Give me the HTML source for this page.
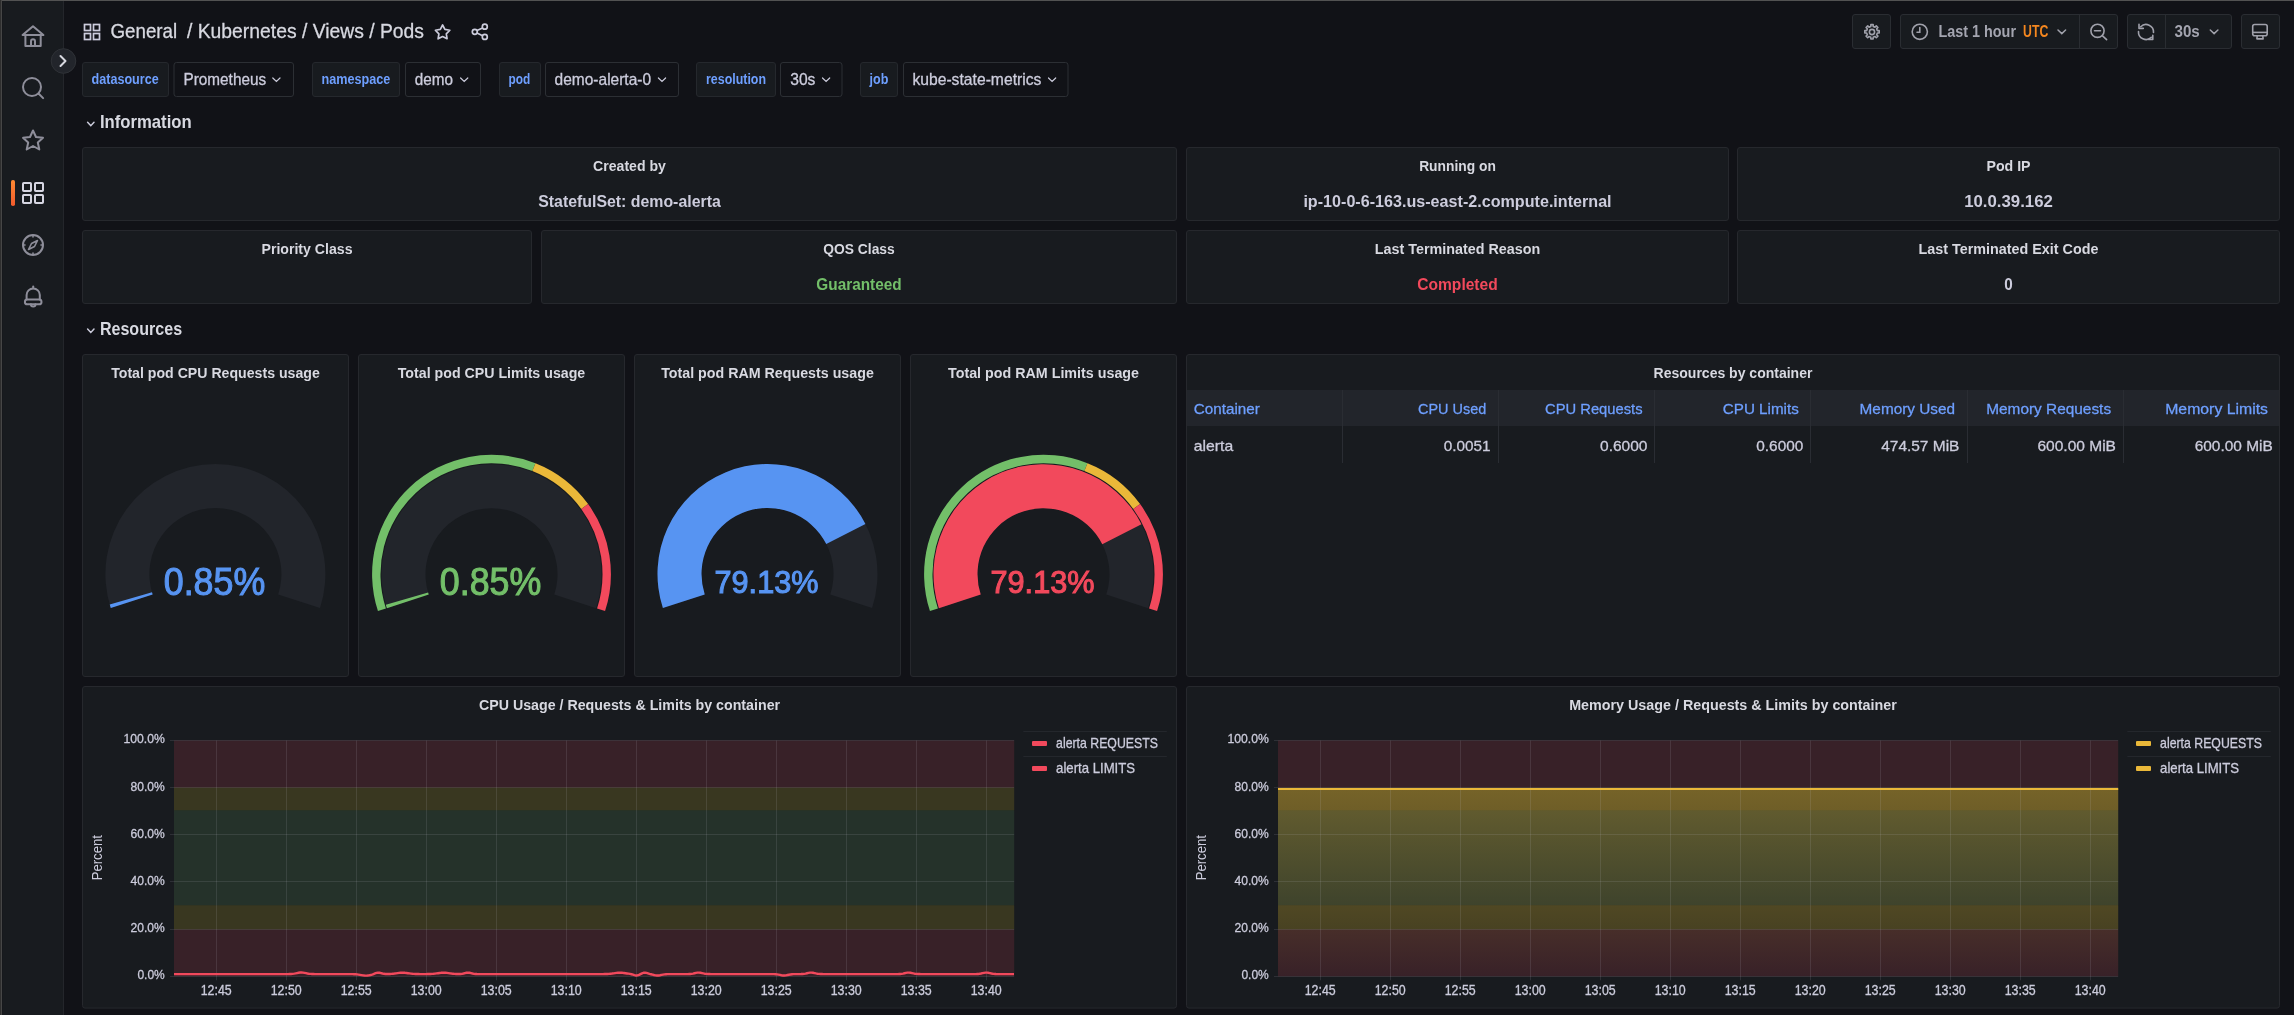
<!DOCTYPE html>
<html><head><meta charset="utf-8"><title>Kubernetes / Views / Pods</title>
<style>html,body{margin:0;padding:0;background:#111217;overflow:hidden}svg{display:block;will-change:transform}text{font-family:"Liberation Sans",sans-serif}</style>
</head><body>
<svg width="2294" height="1015" viewBox="0 0 2294 1015">
<rect x="0.00" y="0.00" width="2294.00" height="1015.00" fill="#111217"/>
<rect x="2.00" y="1.00" width="61.00" height="1014.00" fill="#181b1f"/>
<rect x="63.00" y="1.00" width="1.00" height="1014.00" fill="#24262b"/>
<rect x="0.00" y="0.00" width="1.00" height="1015.00" fill="#2e2e2e"/>
<rect x="1.00" y="0.00" width="1.00" height="1015.00" fill="#464646"/>
<rect x="2.00" y="1.00" width="1.00" height="1015.00" fill="#16181c"/>
<rect x="2.00" y="0.00" width="2292.00" height="1.00" fill="#525252"/>
<g fill="none" stroke="#8e8e9a" stroke-width="2" stroke-linejoin="round">
<path d="M22.6 35.1 L33 26.2 L43.4 35.1 Z"/>
<path d="M25.4 35.1 V46 H40.7 V35.1"/>
<path d="M31 46 V41.2 a2 2 0 0 1 4 0 V46"/>
<circle cx="32" cy="87" r="9"/>
<path d="M38.5 93.5 L43.1 98.1" stroke-linecap="round"/>
<path d="M33 130.5 L36 137 L43 137.8 L37.8 142.5 L39.3 149.5 L33 146 L26.7 149.5 L28.2 142.5 L23 137.8 L30 137 Z"/>
</g>
<g fill="none" stroke="#d6d6e2" stroke-width="2">
<rect x="23" y="183" width="8" height="8" rx="0.8"/>
<rect x="35" y="183" width="8" height="8" rx="0.8"/>
<rect x="23" y="195" width="8" height="8" rx="0.8"/>
<rect x="35" y="195" width="8" height="8" rx="0.8"/>
</g>
<defs><linearGradient id="og" x1="0" y1="0" x2="0" y2="1"><stop offset="0" stop-color="#ff8a33"/><stop offset="1" stop-color="#f25a2c"/></linearGradient></defs>
<rect x="11.00" y="180.00" width="4.00" height="26.00" fill="url(#og)" rx="1.8"/>
<g fill="none" stroke="#8e8e9a" stroke-width="2" stroke-linecap="round" stroke-linejoin="round">
<circle cx="33" cy="245" r="10"/>
<path d="M37.5 240.5 L34.5 246.5 L28.5 249.5 L31.5 243.5 Z" stroke-width="1.6"/>
<path d="M33 235.5v1.5 M33 253v1.5 M23.5 245h1.5 M41 245h1.5" stroke-width="1.6"/>
<path d="M26.6 299.6 V295 a6.6 6.6 0 0 1 13.2 0 V299.6"/>
<rect x="24.9" y="299.6" width="16.6" height="4.7" rx="2.35"/>
<path d="M33.2 286.4 v1.8"/>
<path d="M30.9 304.3 a2.3 2.3 0 0 0 4.6 0"/>
</g>
<circle cx="63.5" cy="61" r="12.3" fill="#22252b" stroke="#2f3237" stroke-width="1"/>
<path d="M60.5 56 L65.5 61 L60.5 66" fill="none" stroke="#d8d9e0" stroke-width="2" stroke-linecap="round" stroke-linejoin="round"/>
<g fill="none" stroke="#ccccdc" stroke-width="1.7">
<rect x="84.5" y="24.5" width="6" height="6"/>
<rect x="93.5" y="24.5" width="6" height="6"/>
<rect x="84.5" y="33.5" width="6" height="6"/>
<rect x="93.5" y="33.5" width="6" height="6"/>
</g>
<text x="110.5" y="38.1" font-size="20.64" font-weight="normal" fill="#d8d9e1" text-anchor="start" textLength="66.7" lengthAdjust="spacingAndGlyphs" stroke="#d8d9e1" stroke-width="0.3">General</text>
<text x="187.0" y="38.1" font-size="20.64" font-weight="normal" fill="#d8d9e1" text-anchor="start" textLength="237.0" lengthAdjust="spacingAndGlyphs" stroke="#d8d9e1" stroke-width="0.3">/ Kubernetes / Views / Pods</text>
<path d="M442.60 25.00 L444.89 29.44 L449.83 30.25 L446.31 33.81 L447.07 38.75 L442.60 36.50 L438.13 38.75 L438.89 33.81 L435.37 30.25 L440.31 29.44 Z" fill="none" stroke="#ccccdc" stroke-width="1.7" stroke-linejoin="round"/>
<g fill="none" stroke="#ccccdc" stroke-width="1.7"><circle cx="484.8" cy="26.7" r="2.5"/><circle cx="474.8" cy="31.8" r="2.5"/><circle cx="484.8" cy="36.9" r="2.5"/><path d="M477 30.6 L482.6 27.9 M477 33 L482.6 35.7"/></g>
<rect x="1852.50" y="14.50" width="38.00" height="34.00" fill="#181b1f" stroke="#2a2d32" stroke-width="1" rx="2.5"/>
<rect x="1900.50" y="14.50" width="217.00" height="34.00" fill="#181b1f" stroke="#2a2d32" stroke-width="1" rx="2.5"/>
<rect x="2079.00" y="15.00" width="1.00" height="33.00" fill="#2a2d32"/>
<rect x="2127.50" y="14.50" width="104.00" height="34.00" fill="#181b1f" stroke="#2a2d32" stroke-width="1" rx="2.5"/>
<rect x="2165.00" y="15.00" width="1.00" height="33.00" fill="#2a2d32"/>
<rect x="2241.50" y="14.50" width="38.00" height="34.00" fill="#181b1f" stroke="#2a2d32" stroke-width="1" rx="2.5"/>
<path d="M1876.64 28.84 L1877.37 30.61 L1879.21 30.66 L1879.21 32.94 L1877.37 32.99 L1876.64 34.76 L1877.91 36.09 L1876.29 37.71 L1874.96 36.44 L1873.19 37.17 L1873.14 39.01 L1870.86 39.01 L1870.81 37.17 L1869.04 36.44 L1867.71 37.71 L1866.09 36.09 L1867.36 34.76 L1866.63 32.99 L1864.79 32.94 L1864.79 30.66 L1866.63 30.61 L1867.36 28.84 L1866.09 27.51 L1867.71 25.89 L1869.04 27.16 L1870.81 26.43 L1870.86 24.59 L1873.14 24.59 L1873.19 26.43 L1874.96 27.16 L1876.29 25.89 L1877.91 27.51 Z" fill="none" stroke="#a0a1ab" stroke-width="1.6" stroke-linejoin="round"/>
<circle cx="1872" cy="32" r="2.6" fill="none" stroke="#a0a1ab" stroke-width="1.6"/>
<g fill="none" stroke="#a0a1ab" stroke-width="1.6" stroke-linecap="round"><circle cx="1919.8" cy="31.8" r="7.6"/><path d="M1919.8 27.5 V32.2 H1917"/></g>
<text x="1938.5" y="37.0" font-size="16.13" font-weight="bold" fill="#a4a5b0" text-anchor="start" textLength="77.5" lengthAdjust="spacingAndGlyphs">Last 1 hour</text>
<text x="2023.0" y="37.0" font-size="16.13" font-weight="bold" fill="#f5871f" text-anchor="start" textLength="25.3" lengthAdjust="spacingAndGlyphs">UTC</text>
<path d="M2058 30 L2061.8 33.6 L2065.6 30" fill="none" stroke="#a0a1ab" stroke-width="1.5" stroke-linecap="round"/>
<g fill="none" stroke="#a0a1ab" stroke-width="1.6" stroke-linecap="round"><circle cx="2097.5" cy="30.8" r="6.6"/><path d="M2102.3 35.6 L2106.6 39.6 M2094.5 30.8 H2100.5"/></g>
<g fill="none" stroke="#a0a1ab" stroke-width="1.6" stroke-linecap="round" stroke-linejoin="round"><path d="M2153.5 32.5 A7.5 7.5 0 0 0 2140.7 26.7"/><path d="M2139 24.2 V28.4 H2143.3"/><path d="M2138.5 31.5 A7.5 7.5 0 0 0 2151.3 37.3"/><path d="M2152.8 35.2 V39.4 H2148.5"/></g>
<text x="2174.5" y="37.0" font-size="16.13" font-weight="bold" fill="#a4a5b0" text-anchor="start" textLength="25.3" lengthAdjust="spacingAndGlyphs">30s</text>
<path d="M2210.3 30 L2214.1 33.6 L2217.9 30" fill="none" stroke="#a0a1ab" stroke-width="1.5" stroke-linecap="round"/>
<g fill="none" stroke="#a0a1ab" stroke-width="1.6" stroke-linejoin="round"><rect x="2252.7" y="24.5" width="14.5" height="11.2" rx="2"/><path d="M2252.7 32.4 H2267.2"/><path d="M2257.2 35.7 L2256.9 38.9 H2263.1 L2262.8 35.7"/></g>
<rect x="82.50" y="62.50" width="86.00" height="34.00" fill="#181b1f" stroke="#25282d" stroke-width="1" rx="2.5"/>
<text x="91.6" y="84.0" font-size="13.81" font-weight="bold" fill="#6e9fff" text-anchor="start" textLength="67.1" lengthAdjust="spacingAndGlyphs">datasource</text>
<rect x="174.00" y="62.50" width="119.50" height="34.00" fill="#111217" stroke="#2c2f34" stroke-width="1" rx="2.5"/>
<text x="183.5" y="85.0" font-size="15.99" font-weight="normal" fill="#ccccdc" text-anchor="start" textLength="82.6" lengthAdjust="spacingAndGlyphs" stroke="#ccccdc" stroke-width="0.3">Prometheus</text>
<path d="M272.8 78 L276.4 81.4 L280.0 78" fill="none" stroke="#ccccdc" stroke-width="1.2" stroke-linecap="round"/>
<rect x="312.50" y="62.50" width="87.00" height="34.00" fill="#181b1f" stroke="#25282d" stroke-width="1" rx="2.5"/>
<text x="321.5" y="84.0" font-size="13.81" font-weight="bold" fill="#6e9fff" text-anchor="start" textLength="68.8" lengthAdjust="spacingAndGlyphs">namespace</text>
<rect x="405.50" y="62.50" width="75.00" height="34.00" fill="#111217" stroke="#2c2f34" stroke-width="1" rx="2.5"/>
<text x="414.8" y="85.0" font-size="15.99" font-weight="normal" fill="#ccccdc" text-anchor="start" textLength="38.2" lengthAdjust="spacingAndGlyphs" stroke="#ccccdc" stroke-width="0.3">demo</text>
<path d="M460.6 78 L464.2 81.4 L467.8 78" fill="none" stroke="#ccccdc" stroke-width="1.2" stroke-linecap="round"/>
<rect x="499.50" y="62.50" width="41.00" height="34.00" fill="#181b1f" stroke="#25282d" stroke-width="1" rx="2.5"/>
<text x="508.6" y="84.0" font-size="13.81" font-weight="bold" fill="#6e9fff" text-anchor="start" textLength="21.8" lengthAdjust="spacingAndGlyphs">pod</text>
<rect x="545.50" y="62.50" width="133.00" height="34.00" fill="#111217" stroke="#2c2f34" stroke-width="1" rx="2.5"/>
<text x="554.6" y="85.0" font-size="15.99" font-weight="normal" fill="#ccccdc" text-anchor="start" textLength="96.5" lengthAdjust="spacingAndGlyphs" stroke="#ccccdc" stroke-width="0.3">demo-alerta-0</text>
<path d="M658.4 78 L662.0 81.4 L665.6 78" fill="none" stroke="#ccccdc" stroke-width="1.2" stroke-linecap="round"/>
<rect x="696.50" y="62.50" width="79.00" height="34.00" fill="#181b1f" stroke="#25282d" stroke-width="1" rx="2.5"/>
<text x="706.0" y="84.0" font-size="13.81" font-weight="bold" fill="#6e9fff" text-anchor="start" textLength="60.0" lengthAdjust="spacingAndGlyphs">resolution</text>
<rect x="780.50" y="62.50" width="61.50" height="34.00" fill="#111217" stroke="#2c2f34" stroke-width="1" rx="2.5"/>
<text x="790.2" y="85.0" font-size="15.99" font-weight="normal" fill="#ccccdc" text-anchor="start" textLength="25.2" lengthAdjust="spacingAndGlyphs" stroke="#ccccdc" stroke-width="0.3">30s</text>
<path d="M822.5 78 L826.1 81.4 L829.7 78" fill="none" stroke="#ccccdc" stroke-width="1.2" stroke-linecap="round"/>
<rect x="860.50" y="62.50" width="37.00" height="34.00" fill="#181b1f" stroke="#25282d" stroke-width="1" rx="2.5"/>
<text x="869.6" y="84.0" font-size="13.81" font-weight="bold" fill="#6e9fff" text-anchor="start" textLength="18.8" lengthAdjust="spacingAndGlyphs">job</text>
<rect x="903.50" y="62.50" width="164.50" height="34.00" fill="#111217" stroke="#2c2f34" stroke-width="1" rx="2.5"/>
<text x="912.4" y="85.0" font-size="15.99" font-weight="normal" fill="#ccccdc" text-anchor="start" textLength="129.0" lengthAdjust="spacingAndGlyphs" stroke="#ccccdc" stroke-width="0.3">kube-state-metrics</text>
<path d="M1048.5 78 L1052.1 81.4 L1055.7 78" fill="none" stroke="#ccccdc" stroke-width="1.2" stroke-linecap="round"/>
<path d="M87.6 122.3 L90.8 125.7 L94 122.3" fill="none" stroke="#ccccdc" stroke-width="1.5" stroke-linecap="round"/>
<text x="99.9" y="127.7" font-size="17.88" font-weight="bold" fill="#d8d9e1" text-anchor="start" textLength="91.8" lengthAdjust="spacingAndGlyphs">Information</text>
<path d="M87.6 329.1 L90.8 332.5 L94 329.1" fill="none" stroke="#ccccdc" stroke-width="1.5" stroke-linecap="round"/>
<text x="99.9" y="334.9" font-size="17.88" font-weight="bold" fill="#d8d9e1" text-anchor="start" textLength="82.2" lengthAdjust="spacingAndGlyphs">Resources</text>
<rect x="82.50" y="147.50" width="1094.00" height="73.00" fill="#181b1f" stroke="#26282d" stroke-width="1" rx="2.5"/>
<text x="629.5" y="170.8" font-size="15.55" font-weight="bold" fill="#d8d9e1" text-anchor="middle" textLength="72.8" lengthAdjust="spacingAndGlyphs">Created by</text>
<text x="629.5" y="206.6" font-size="16.86" font-weight="bold" fill="#ccccdc" text-anchor="middle" textLength="182.5" lengthAdjust="spacingAndGlyphs">StatefulSet: demo-alerta</text>
<rect x="1186.50" y="147.50" width="542.00" height="73.00" fill="#181b1f" stroke="#26282d" stroke-width="1" rx="2.5"/>
<text x="1457.5" y="170.8" font-size="15.55" font-weight="bold" fill="#d8d9e1" text-anchor="middle" textLength="76.7" lengthAdjust="spacingAndGlyphs">Running on</text>
<text x="1457.5" y="206.6" font-size="16.86" font-weight="bold" fill="#ccccdc" text-anchor="middle" textLength="308.2" lengthAdjust="spacingAndGlyphs">ip-10-0-6-163.us-east-2.compute.internal</text>
<rect x="1737.50" y="147.50" width="542.00" height="73.00" fill="#181b1f" stroke="#26282d" stroke-width="1" rx="2.5"/>
<text x="2008.5" y="170.8" font-size="15.55" font-weight="bold" fill="#d8d9e1" text-anchor="middle" textLength="44.1" lengthAdjust="spacingAndGlyphs">Pod IP</text>
<text x="2008.5" y="206.6" font-size="16.86" font-weight="bold" fill="#ccccdc" text-anchor="middle" textLength="88.7" lengthAdjust="spacingAndGlyphs">10.0.39.162</text>
<rect x="82.50" y="230.50" width="449.00" height="73.00" fill="#181b1f" stroke="#26282d" stroke-width="1" rx="2.5"/>
<text x="307.0" y="253.8" font-size="15.55" font-weight="bold" fill="#d8d9e1" text-anchor="middle" textLength="91.0" lengthAdjust="spacingAndGlyphs">Priority Class</text>
<rect x="541.50" y="230.50" width="635.00" height="73.00" fill="#181b1f" stroke="#26282d" stroke-width="1" rx="2.5"/>
<text x="859.0" y="253.8" font-size="15.55" font-weight="bold" fill="#d8d9e1" text-anchor="middle" textLength="71.4" lengthAdjust="spacingAndGlyphs">QOS Class</text>
<text x="859.0" y="289.6" font-size="16.86" font-weight="bold" fill="#73bf69" text-anchor="middle" textLength="85.3" lengthAdjust="spacingAndGlyphs">Guaranteed</text>
<rect x="1186.50" y="230.50" width="542.00" height="73.00" fill="#181b1f" stroke="#26282d" stroke-width="1" rx="2.5"/>
<text x="1457.5" y="253.8" font-size="15.55" font-weight="bold" fill="#d8d9e1" text-anchor="middle" textLength="165.4" lengthAdjust="spacingAndGlyphs">Last Terminated Reason</text>
<text x="1457.5" y="289.6" font-size="16.86" font-weight="bold" fill="#f2495c" text-anchor="middle" textLength="80.5" lengthAdjust="spacingAndGlyphs">Completed</text>
<rect x="1737.50" y="230.50" width="542.00" height="73.00" fill="#181b1f" stroke="#26282d" stroke-width="1" rx="2.5"/>
<text x="2008.5" y="253.8" font-size="15.55" font-weight="bold" fill="#d8d9e1" text-anchor="middle" textLength="180.0" lengthAdjust="spacingAndGlyphs">Last Terminated Exit Code</text>
<text x="2008.5" y="289.6" font-size="16.86" font-weight="bold" fill="#ccccdc" text-anchor="middle" textLength="8.5" lengthAdjust="spacingAndGlyphs">0</text>
<rect x="82.50" y="354.50" width="266.00" height="322.00" fill="#181b1f" stroke="#26282d" stroke-width="1" rx="2.5"/>
<text x="215.5" y="377.9" font-size="15.55" font-weight="bold" fill="#d8d9e1" text-anchor="middle" textLength="208.6" lengthAdjust="spacingAndGlyphs">Total pod CPU Requests usage</text>
<path d="M110.78 607.99 A110.00 110.00 0 1 1 320.02 607.99 L278.17 594.40 A66.00 66.00 0 1 0 152.63 594.40 Z" fill="#22252b"/>
<path d="M110.78 607.99 A110.00 110.00 0 0 1 109.75 604.62 L152.01 592.37 A66.00 66.00 0 0 0 152.63 594.40 Z" fill="#5794f2"/>
<text x="214.5" y="595.2" font-size="39.24" font-weight="normal" fill="#5794f2" text-anchor="middle" textLength="101.5" lengthAdjust="spacingAndGlyphs" stroke="#5794f2" stroke-width="1.1">0.85%</text>
<rect x="358.50" y="354.50" width="266.00" height="322.00" fill="#181b1f" stroke="#26282d" stroke-width="1" rx="2.5"/>
<text x="491.5" y="377.9" font-size="15.55" font-weight="bold" fill="#d8d9e1" text-anchor="middle" textLength="187.5" lengthAdjust="spacingAndGlyphs">Total pod CPU Limits usage</text>
<path d="M386.88 608.19 A110.00 110.00 0 1 1 596.12 608.19 L554.27 594.60 A66.00 66.00 0 1 0 428.73 594.60 Z" fill="#22252b"/>
<path d="M386.88 608.19 A110.00 110.00 0 0 1 385.85 604.82 L428.11 592.57 A66.00 66.00 0 0 0 428.73 594.60 Z" fill="#73bf69"/>
<path d="M377.94 611.10 A119.40 119.40 0 0 1 535.45 463.18 L532.36 470.99 A111.00 111.00 0 0 0 385.93 608.50 Z" fill="#73bf69"/>
<path d="M535.45 463.18 A119.40 119.40 0 0 1 588.10 504.02 L581.30 508.96 A111.00 111.00 0 0 0 532.36 470.99 Z" fill="#eab839"/>
<path d="M588.10 504.02 A119.40 119.40 0 0 1 605.06 611.10 L597.07 608.50 A111.00 111.00 0 0 0 581.30 508.96 Z" fill="#f2495c"/>
<text x="490.6" y="595.2" font-size="39.24" font-weight="normal" fill="#73bf69" text-anchor="middle" textLength="101.5" lengthAdjust="spacingAndGlyphs" stroke="#73bf69" stroke-width="1.1">0.85%</text>
<rect x="634.50" y="354.50" width="266.00" height="322.00" fill="#181b1f" stroke="#26282d" stroke-width="1" rx="2.5"/>
<text x="767.5" y="377.9" font-size="15.55" font-weight="bold" fill="#d8d9e1" text-anchor="middle" textLength="212.7" lengthAdjust="spacingAndGlyphs">Total pod RAM Requests usage</text>
<path d="M662.88 607.99 A110.00 110.00 0 1 1 872.12 607.99 L830.27 594.40 A66.00 66.00 0 1 0 704.73 594.40 Z" fill="#22252b"/>
<path d="M662.88 607.99 A110.00 110.00 0 0 1 865.44 523.93 L826.26 543.96 A66.00 66.00 0 0 0 704.73 594.40 Z" fill="#5794f2"/>
<text x="766.5" y="592.5" font-size="31.69" font-weight="normal" fill="#5794f2" text-anchor="middle" textLength="103.9" lengthAdjust="spacingAndGlyphs" stroke="#5794f2" stroke-width="1.1">79.13%</text>
<rect x="910.50" y="354.50" width="266.00" height="322.00" fill="#181b1f" stroke="#26282d" stroke-width="1" rx="2.5"/>
<text x="1043.5" y="377.9" font-size="15.55" font-weight="bold" fill="#d8d9e1" text-anchor="middle" textLength="191.0" lengthAdjust="spacingAndGlyphs">Total pod RAM Limits usage</text>
<path d="M938.88 608.19 A110.00 110.00 0 1 1 1148.12 608.19 L1106.27 594.60 A66.00 66.00 0 1 0 980.73 594.60 Z" fill="#22252b"/>
<path d="M938.88 608.19 A110.00 110.00 0 0 1 1141.44 524.13 L1102.26 544.16 A66.00 66.00 0 0 0 980.73 594.60 Z" fill="#f2495c"/>
<path d="M929.94 611.10 A119.40 119.40 0 0 1 1087.45 463.18 L1084.36 470.99 A111.00 111.00 0 0 0 937.93 608.50 Z" fill="#73bf69"/>
<path d="M1087.45 463.18 A119.40 119.40 0 0 1 1140.10 504.02 L1133.30 508.96 A111.00 111.00 0 0 0 1084.36 470.99 Z" fill="#eab839"/>
<path d="M1140.10 504.02 A119.40 119.40 0 0 1 1157.06 611.10 L1149.07 608.50 A111.00 111.00 0 0 0 1133.30 508.96 Z" fill="#f2495c"/>
<text x="1042.5" y="592.5" font-size="31.69" font-weight="normal" fill="#f2495c" text-anchor="middle" textLength="103.9" lengthAdjust="spacingAndGlyphs" stroke="#f2495c" stroke-width="1.1">79.13%</text>
<rect x="1186.50" y="354.50" width="1093.00" height="322.00" fill="#181b1f" stroke="#26282d" stroke-width="1" rx="2.5"/>
<text x="1733.0" y="377.9" font-size="15.55" font-weight="bold" fill="#d8d9e1" text-anchor="middle" textLength="158.8" lengthAdjust="spacingAndGlyphs">Resources by container</text>
<rect x="1187.00" y="390.00" width="1092.00" height="36.00" fill="#22252b"/>
<rect x="1342.00" y="390.00" width="1.00" height="73.00" fill="#2a2d33"/>
<rect x="1498.00" y="390.00" width="1.00" height="73.00" fill="#2a2d33"/>
<rect x="1654.00" y="390.00" width="1.00" height="73.00" fill="#2a2d33"/>
<rect x="1810.00" y="390.00" width="1.00" height="73.00" fill="#2a2d33"/>
<rect x="1967.00" y="390.00" width="1.00" height="73.00" fill="#2a2d33"/>
<rect x="2123.00" y="390.00" width="1.00" height="73.00" fill="#2a2d33"/>
<text x="1193.8" y="414.0" font-size="15.55" font-weight="normal" fill="#6e9fff" text-anchor="start" textLength="66.0" lengthAdjust="spacingAndGlyphs" stroke="#6e9fff" stroke-width="0.3">Container</text>
<text x="1418.0" y="414.0" font-size="15.55" font-weight="normal" fill="#6e9fff" text-anchor="start" textLength="68.2" lengthAdjust="spacingAndGlyphs" stroke="#6e9fff" stroke-width="0.3">CPU Used</text>
<text x="1545.0" y="414.0" font-size="15.55" font-weight="normal" fill="#6e9fff" text-anchor="start" textLength="97.6" lengthAdjust="spacingAndGlyphs" stroke="#6e9fff" stroke-width="0.3">CPU Requests</text>
<text x="1722.8" y="414.0" font-size="15.55" font-weight="normal" fill="#6e9fff" text-anchor="start" textLength="76.0" lengthAdjust="spacingAndGlyphs" stroke="#6e9fff" stroke-width="0.3">CPU Limits</text>
<text x="1859.6" y="414.0" font-size="15.55" font-weight="normal" fill="#6e9fff" text-anchor="start" textLength="95.4" lengthAdjust="spacingAndGlyphs" stroke="#6e9fff" stroke-width="0.3">Memory Used</text>
<text x="1986.2" y="414.0" font-size="15.55" font-weight="normal" fill="#6e9fff" text-anchor="start" textLength="124.9" lengthAdjust="spacingAndGlyphs" stroke="#6e9fff" stroke-width="0.3">Memory Requests</text>
<text x="2165.2" y="414.0" font-size="15.55" font-weight="normal" fill="#6e9fff" text-anchor="start" textLength="102.8" lengthAdjust="spacingAndGlyphs" stroke="#6e9fff" stroke-width="0.3">Memory Limits</text>
<text x="1193.8" y="451.0" font-size="15.55" font-weight="normal" fill="#ccccdc" text-anchor="start" textLength="39.4" lengthAdjust="spacingAndGlyphs" stroke="#ccccdc" stroke-width="0.3">alerta</text>
<text x="1443.7" y="451.0" font-size="15.55" font-weight="normal" fill="#ccccdc" text-anchor="start" textLength="46.8" lengthAdjust="spacingAndGlyphs" stroke="#ccccdc" stroke-width="0.3">0.0051</text>
<text x="1600.0" y="451.0" font-size="15.55" font-weight="normal" fill="#ccccdc" text-anchor="start" textLength="47.5" lengthAdjust="spacingAndGlyphs" stroke="#ccccdc" stroke-width="0.3">0.6000</text>
<text x="1756.3" y="451.0" font-size="15.55" font-weight="normal" fill="#ccccdc" text-anchor="start" textLength="47.0" lengthAdjust="spacingAndGlyphs" stroke="#ccccdc" stroke-width="0.3">0.6000</text>
<text x="1881.2" y="451.0" font-size="15.55" font-weight="normal" fill="#ccccdc" text-anchor="start" textLength="78.2" lengthAdjust="spacingAndGlyphs" stroke="#ccccdc" stroke-width="0.3">474.57 MiB</text>
<text x="2037.4" y="451.0" font-size="15.55" font-weight="normal" fill="#ccccdc" text-anchor="start" textLength="78.6" lengthAdjust="spacingAndGlyphs" stroke="#ccccdc" stroke-width="0.3">600.00 MiB</text>
<text x="2194.7" y="451.0" font-size="15.55" font-weight="normal" fill="#ccccdc" text-anchor="start" textLength="78.0" lengthAdjust="spacingAndGlyphs" stroke="#ccccdc" stroke-width="0.3">600.00 MiB</text>
<rect x="82.50" y="686.50" width="1094.00" height="321.60" fill="#181b1f" stroke="#26282d" stroke-width="1" rx="2.5"/>
<text x="629.5" y="709.7" font-size="15.26" font-weight="bold" fill="#d8d9e1" text-anchor="middle" textLength="301.2" lengthAdjust="spacingAndGlyphs">CPU Usage / Requests &amp; Limits by container</text>
<rect x="174.00" y="740.50" width="840.20" height="47.00" fill="#f2495c" fill-opacity="0.15"/>
<rect x="174.00" y="787.50" width="840.20" height="22.80" fill="#fade2a" fill-opacity="0.15"/>
<rect x="174.00" y="810.30" width="840.20" height="95.00" fill="#73bf69" fill-opacity="0.15"/>
<rect x="174.00" y="905.30" width="840.20" height="24.10" fill="#fade2a" fill-opacity="0.15"/>
<rect x="174.00" y="929.40" width="840.20" height="47.00" fill="#f2495c" fill-opacity="0.15"/>
<path d="M170.0 976.5 H1014.2 M170.0 929.5 H1014.2 M170.0 881.5 H1014.2 M170.0 834.5 H1014.2 M170.0 787.5 H1014.2 M170.0 740.5 H1014.2 M216.5 740.5 V980.3 M286.5 740.5 V980.3 M356.5 740.5 V980.3 M426.5 740.5 V980.3 M496.5 740.5 V980.3 M566.5 740.5 V980.3 M636.5 740.5 V980.3 M706.5 740.5 V980.3 M776.5 740.5 V980.3 M846.5 740.5 V980.3 M916.5 740.5 V980.3 M986.5 740.5 V980.3" stroke="#ccccdc" stroke-opacity="0.12" stroke-width="1" fill="none"/>
<text x="164.8" y="979.1" font-size="13.52" font-weight="normal" fill="#ccccdc" text-anchor="end" textLength="27.4" lengthAdjust="spacingAndGlyphs" stroke="#ccccdc" stroke-width="0.3">0.0%</text>
<text x="164.8" y="931.9" font-size="13.52" font-weight="normal" fill="#ccccdc" text-anchor="end" textLength="34.3" lengthAdjust="spacingAndGlyphs" stroke="#ccccdc" stroke-width="0.3">20.0%</text>
<text x="164.8" y="884.8" font-size="13.52" font-weight="normal" fill="#ccccdc" text-anchor="end" textLength="34.3" lengthAdjust="spacingAndGlyphs" stroke="#ccccdc" stroke-width="0.3">40.0%</text>
<text x="164.8" y="837.6" font-size="13.52" font-weight="normal" fill="#ccccdc" text-anchor="end" textLength="34.3" lengthAdjust="spacingAndGlyphs" stroke="#ccccdc" stroke-width="0.3">60.0%</text>
<text x="164.8" y="790.5" font-size="13.52" font-weight="normal" fill="#ccccdc" text-anchor="end" textLength="34.3" lengthAdjust="spacingAndGlyphs" stroke="#ccccdc" stroke-width="0.3">80.0%</text>
<text x="164.8" y="743.3" font-size="13.52" font-weight="normal" fill="#ccccdc" text-anchor="end" textLength="41.4" lengthAdjust="spacingAndGlyphs" stroke="#ccccdc" stroke-width="0.3">100.0%</text>
<text x="216.2" y="995.2" font-size="13.81" font-weight="normal" fill="#ccccdc" text-anchor="middle" textLength="31.0" lengthAdjust="spacingAndGlyphs" stroke="#ccccdc" stroke-width="0.3">12:45</text>
<text x="286.2" y="995.2" font-size="13.81" font-weight="normal" fill="#ccccdc" text-anchor="middle" textLength="31.0" lengthAdjust="spacingAndGlyphs" stroke="#ccccdc" stroke-width="0.3">12:50</text>
<text x="356.2" y="995.2" font-size="13.81" font-weight="normal" fill="#ccccdc" text-anchor="middle" textLength="31.0" lengthAdjust="spacingAndGlyphs" stroke="#ccccdc" stroke-width="0.3">12:55</text>
<text x="426.2" y="995.2" font-size="13.81" font-weight="normal" fill="#ccccdc" text-anchor="middle" textLength="31.0" lengthAdjust="spacingAndGlyphs" stroke="#ccccdc" stroke-width="0.3">13:00</text>
<text x="496.2" y="995.2" font-size="13.81" font-weight="normal" fill="#ccccdc" text-anchor="middle" textLength="31.0" lengthAdjust="spacingAndGlyphs" stroke="#ccccdc" stroke-width="0.3">13:05</text>
<text x="566.2" y="995.2" font-size="13.81" font-weight="normal" fill="#ccccdc" text-anchor="middle" textLength="31.0" lengthAdjust="spacingAndGlyphs" stroke="#ccccdc" stroke-width="0.3">13:10</text>
<text x="636.2" y="995.2" font-size="13.81" font-weight="normal" fill="#ccccdc" text-anchor="middle" textLength="31.0" lengthAdjust="spacingAndGlyphs" stroke="#ccccdc" stroke-width="0.3">13:15</text>
<text x="706.2" y="995.2" font-size="13.81" font-weight="normal" fill="#ccccdc" text-anchor="middle" textLength="31.0" lengthAdjust="spacingAndGlyphs" stroke="#ccccdc" stroke-width="0.3">13:20</text>
<text x="776.2" y="995.2" font-size="13.81" font-weight="normal" fill="#ccccdc" text-anchor="middle" textLength="31.0" lengthAdjust="spacingAndGlyphs" stroke="#ccccdc" stroke-width="0.3">13:25</text>
<text x="846.2" y="995.2" font-size="13.81" font-weight="normal" fill="#ccccdc" text-anchor="middle" textLength="31.0" lengthAdjust="spacingAndGlyphs" stroke="#ccccdc" stroke-width="0.3">13:30</text>
<text x="916.2" y="995.2" font-size="13.81" font-weight="normal" fill="#ccccdc" text-anchor="middle" textLength="31.0" lengthAdjust="spacingAndGlyphs" stroke="#ccccdc" stroke-width="0.3">13:35</text>
<text x="986.2" y="995.2" font-size="13.81" font-weight="normal" fill="#ccccdc" text-anchor="middle" textLength="31.0" lengthAdjust="spacingAndGlyphs" stroke="#ccccdc" stroke-width="0.3">13:40</text>
<text transform="translate(102.0 857.7) rotate(-90)" font-size="14" fill="#ccccdc" text-anchor="middle" textLength="45" lengthAdjust="spacingAndGlyphs">Percent</text>
<path d="M174.0 974.10 L175.5 974.10 L177.0 974.10 L178.5 974.10 L180.0 974.10 L181.5 974.10 L183.0 974.10 L184.5 974.10 L186.0 974.10 L187.5 974.10 L189.0 974.10 L190.5 974.10 L192.0 974.10 L193.5 974.10 L195.0 974.10 L196.5 974.10 L198.0 974.10 L199.5 974.10 L201.0 974.10 L202.5 974.10 L204.0 974.10 L205.5 974.10 L207.0 974.10 L208.5 974.10 L210.0 974.10 L211.5 974.10 L213.0 974.10 L214.5 974.10 L216.0 974.10 L217.5 974.10 L219.0 974.10 L220.5 974.10 L222.0 974.10 L223.5 974.10 L225.0 974.10 L226.5 974.10 L228.0 974.10 L229.5 974.10 L231.0 974.10 L232.5 974.10 L234.0 974.10 L235.5 974.10 L237.0 974.10 L238.5 974.10 L240.0 974.10 L241.5 974.10 L243.0 974.10 L244.5 974.10 L246.0 974.10 L247.5 974.10 L249.0 974.10 L250.5 974.10 L252.0 974.10 L253.5 974.10 L255.0 974.10 L256.5 974.10 L258.0 974.10 L259.5 974.10 L261.0 974.10 L262.5 974.10 L264.0 974.10 L265.5 974.10 L267.0 974.10 L268.5 974.10 L270.0 974.10 L271.5 974.10 L273.0 974.10 L274.5 974.10 L276.0 974.10 L277.5 974.10 L279.0 974.10 L280.5 974.10 L282.0 974.10 L283.5 974.10 L285.0 974.10 L286.5 974.09 L288.0 974.08 L289.5 974.04 L291.0 973.97 L292.5 973.85 L294.0 973.65 L295.5 973.38 L297.0 973.06 L298.5 972.76 L300.0 972.56 L301.5 972.50 L303.0 972.62 L304.5 972.87 L306.0 973.19 L307.5 973.49 L309.0 973.74 L310.5 973.91 L312.0 974.01 L313.5 974.06 L315.0 974.08 L316.5 974.09 L318.0 974.10 L319.5 974.10 L321.0 974.10 L322.5 974.10 L324.0 974.10 L325.5 974.10 L327.0 974.10 L328.5 974.10 L330.0 974.10 L331.5 974.10 L333.0 974.10 L334.5 974.10 L336.0 974.10 L337.5 974.10 L339.0 974.10 L340.5 974.10 L342.0 974.10 L343.5 974.10 L345.0 974.10 L346.5 974.10 L348.0 974.10 L349.5 974.11 L351.0 974.12 L352.5 974.15 L354.0 974.20 L355.5 974.29 L357.0 974.43 L358.5 974.62 L360.0 974.86 L361.5 975.13 L363.0 975.37 L364.5 975.54 L366.0 975.60 L367.5 975.53 L369.0 975.33 L370.5 975.02 L372.0 974.58 L373.5 974.02 L375.0 973.39 L376.5 972.85 L378.0 972.60 L379.5 972.71 L381.0 973.08 L382.5 973.50 L384.0 973.81 L385.5 973.97 L387.0 974.03 L388.5 974.02 L390.0 973.96 L391.5 973.87 L393.0 973.73 L394.5 973.56 L396.0 973.35 L397.5 973.13 L399.0 972.93 L400.5 972.78 L402.0 972.71 L403.5 972.72 L405.0 972.82 L406.5 973.00 L408.0 973.21 L409.5 973.42 L411.0 973.62 L412.5 973.78 L414.0 973.90 L415.5 973.99 L417.0 974.04 L418.5 974.07 L420.0 974.08 L421.5 974.09 L423.0 974.09 L424.5 974.09 L426.0 974.08 L427.5 974.07 L429.0 974.04 L430.5 973.99 L432.0 973.90 L433.5 973.78 L435.0 973.62 L436.5 973.42 L438.0 973.21 L439.5 973.00 L441.0 972.82 L442.5 972.72 L444.0 972.71 L445.5 972.78 L447.0 972.93 L448.5 973.13 L450.0 973.35 L451.5 973.56 L453.0 973.73 L454.5 973.87 L456.0 973.96 L457.5 974.02 L459.0 974.03 L460.5 973.98 L462.0 973.82 L463.5 973.53 L465.0 973.12 L466.5 972.75 L468.0 972.60 L469.5 972.75 L471.0 973.13 L472.5 973.53 L474.0 973.83 L475.5 974.00 L477.0 974.07 L478.5 974.09 L480.0 974.10 L481.5 974.10 L483.0 974.10 L484.5 974.10 L486.0 974.10 L487.5 974.10 L489.0 974.10 L490.5 974.10 L492.0 974.10 L493.5 974.10 L495.0 974.10 L496.5 974.10 L498.0 974.10 L499.5 974.10 L501.0 974.10 L502.5 974.10 L504.0 974.10 L505.5 974.10 L507.0 974.10 L508.5 974.10 L510.0 974.10 L511.5 974.10 L513.0 974.10 L514.5 974.10 L516.0 974.10 L517.5 974.10 L519.0 974.10 L520.5 974.10 L522.0 974.10 L523.5 974.10 L525.0 974.10 L526.5 974.10 L528.0 974.10 L529.5 974.10 L531.0 974.10 L532.5 974.10 L534.0 974.10 L535.5 974.10 L537.0 974.10 L538.5 974.10 L540.0 974.10 L541.5 974.10 L543.0 974.10 L544.5 974.10 L546.0 974.10 L547.5 974.10 L549.0 974.10 L550.5 974.10 L552.0 974.10 L553.5 974.10 L555.0 974.10 L556.5 974.10 L558.0 974.10 L559.5 974.10 L561.0 974.10 L562.5 974.10 L564.0 974.10 L565.5 974.10 L567.0 974.10 L568.5 974.10 L570.0 974.10 L571.5 974.10 L573.0 974.10 L574.5 974.10 L576.0 974.10 L577.5 974.10 L579.0 974.10 L580.5 974.10 L582.0 974.10 L583.5 974.10 L585.0 974.10 L586.5 974.10 L588.0 974.10 L589.5 974.10 L591.0 974.10 L592.5 974.10 L594.0 974.10 L595.5 974.10 L597.0 974.10 L598.5 974.10 L600.0 974.10 L601.5 974.09 L603.0 974.08 L604.5 974.06 L606.0 974.02 L607.5 973.96 L609.0 973.87 L610.5 973.73 L612.0 973.56 L613.5 973.35 L615.0 973.13 L616.5 972.93 L618.0 972.78 L619.5 972.71 L621.0 972.72 L622.5 972.82 L624.0 973.00 L625.5 973.21 L627.0 973.44 L628.5 973.67 L630.0 973.93 L631.5 974.27 L633.0 974.71 L634.5 975.16 L636.0 975.46 L637.5 975.40 L639.0 974.91 L640.5 974.13 L642.0 973.32 L643.5 972.75 L645.0 972.60 L646.5 972.85 L648.0 973.31 L649.5 973.81 L651.0 974.24 L652.5 974.64 L654.0 975.01 L655.5 975.32 L657.0 975.49 L658.5 975.45 L660.0 975.24 L661.5 974.92 L663.0 974.61 L664.5 974.37 L666.0 974.23 L667.5 974.15 L669.0 974.12 L670.5 974.11 L672.0 974.10 L673.5 974.10 L675.0 974.10 L676.5 974.10 L678.0 974.10 L679.5 974.10 L681.0 974.10 L682.5 974.10 L684.0 974.10 L685.5 974.10 L687.0 974.08 L688.5 974.05 L690.0 973.98 L691.5 973.83 L693.0 973.59 L694.5 973.27 L696.0 972.92 L697.5 972.67 L699.0 972.60 L700.5 972.75 L702.0 973.06 L703.5 973.40 L705.0 973.70 L706.5 973.90 L708.0 974.02 L709.5 974.07 L711.0 974.09 L712.5 974.10 L714.0 974.10 L715.5 974.10 L717.0 974.10 L718.5 974.10 L720.0 974.10 L721.5 974.10 L723.0 974.10 L724.5 974.10 L726.0 974.10 L727.5 974.10 L729.0 974.10 L730.5 974.10 L732.0 974.10 L733.5 974.10 L735.0 974.10 L736.5 974.10 L738.0 974.10 L739.5 974.10 L741.0 974.10 L742.5 974.10 L744.0 974.10 L745.5 974.10 L747.0 974.10 L748.5 974.10 L750.0 974.10 L751.5 974.10 L753.0 974.10 L754.5 974.10 L756.0 974.10 L757.5 974.10 L759.0 974.10 L760.5 974.10 L762.0 974.10 L763.5 974.10 L765.0 974.10 L766.5 974.10 L768.0 974.10 L769.5 974.10 L771.0 974.11 L772.5 974.12 L774.0 974.15 L775.5 974.23 L777.0 974.37 L778.5 974.61 L780.0 974.92 L781.5 975.24 L783.0 975.45 L784.5 975.49 L786.0 975.33 L787.5 975.03 L789.0 974.71 L790.5 974.44 L792.0 974.27 L793.5 974.17 L795.0 974.12 L796.5 974.11 L798.0 974.10 L799.5 974.08 L801.0 974.05 L802.5 973.98 L804.0 973.83 L805.5 973.59 L807.0 973.27 L808.5 972.92 L810.0 972.67 L811.5 972.60 L813.0 972.75 L814.5 973.06 L816.0 973.40 L817.5 973.70 L819.0 973.90 L820.5 974.02 L822.0 974.07 L823.5 974.09 L825.0 974.10 L826.5 974.10 L828.0 974.10 L829.5 974.10 L831.0 974.10 L832.5 974.10 L834.0 974.10 L835.5 974.10 L837.0 974.10 L838.5 974.10 L840.0 974.10 L841.5 974.10 L843.0 974.10 L844.5 974.10 L846.0 974.10 L847.5 974.10 L849.0 974.10 L850.5 974.10 L852.0 974.10 L853.5 974.10 L855.0 974.10 L856.5 974.10 L858.0 974.10 L859.5 974.10 L861.0 974.10 L862.5 974.10 L864.0 974.10 L865.5 974.10 L867.0 974.10 L868.5 974.10 L870.0 974.10 L871.5 974.10 L873.0 974.10 L874.5 974.10 L876.0 974.10 L877.5 974.10 L879.0 974.10 L880.5 974.10 L882.0 974.10 L883.5 974.10 L885.0 974.10 L886.5 974.10 L888.0 974.10 L889.5 974.10 L891.0 974.10 L892.5 974.10 L894.0 974.10 L895.5 974.10 L897.0 974.08 L898.5 974.05 L900.0 973.98 L901.5 973.83 L903.0 973.59 L904.5 973.27 L906.0 972.92 L907.5 972.67 L909.0 972.60 L910.5 972.75 L912.0 973.06 L913.5 973.40 L915.0 973.70 L916.5 973.90 L918.0 974.02 L919.5 974.07 L921.0 974.09 L922.5 974.10 L924.0 974.10 L925.5 974.10 L927.0 974.10 L928.5 974.10 L930.0 974.10 L931.5 974.10 L933.0 974.10 L934.5 974.10 L936.0 974.10 L937.5 974.10 L939.0 974.10 L940.5 974.10 L942.0 974.10 L943.5 974.10 L945.0 974.10 L946.5 974.10 L948.0 974.10 L949.5 974.10 L951.0 974.10 L952.5 974.10 L954.0 974.10 L955.5 974.10 L957.0 974.10 L958.5 974.10 L960.0 974.10 L961.5 974.10 L963.0 974.10 L964.5 974.10 L966.0 974.10 L967.5 974.10 L969.0 974.10 L970.5 974.10 L972.0 974.10 L973.5 974.09 L975.0 974.08 L976.5 974.04 L978.0 973.96 L979.5 973.79 L981.0 973.53 L982.5 973.20 L984.0 972.86 L985.5 972.64 L987.0 972.62 L988.5 972.81 L990.0 973.13 L991.5 973.47 L993.0 973.75 L994.5 973.93 L996.0 974.03 L997.5 974.08 L999.0 974.09 L1000.5 974.10 L1002.0 974.10 L1003.5 974.10 L1005.0 974.10 L1006.5 974.10 L1008.0 974.10 L1009.5 974.10 L1011.0 974.10 L1012.5 974.10 L1014.0 974.10" stroke="#f2495c" stroke-width="2.4" fill="none" stroke-linejoin="round"/>
<rect x="1023.30" y="731.00" width="143.50" height="1.00" fill="#ccccdc" fill-opacity="0.07"/>
<rect x="1023.30" y="756.00" width="143.50" height="1.00" fill="#ccccdc" fill-opacity="0.07"/>
<rect x="1032.00" y="741.00" width="15.00" height="5.00" fill="#f2495c" rx="1"/>
<rect x="1032.00" y="766.00" width="15.00" height="5.00" fill="#f2495c" rx="1"/>
<text x="1056.1" y="748.2" font-size="14.10" font-weight="normal" fill="#ccccdc" text-anchor="start" textLength="101.8" lengthAdjust="spacingAndGlyphs" stroke="#ccccdc" stroke-width="0.3">alerta REQUESTS</text>
<text x="1056.1" y="773.2" font-size="14.10" font-weight="normal" fill="#ccccdc" text-anchor="start" textLength="79.0" lengthAdjust="spacingAndGlyphs" stroke="#ccccdc" stroke-width="0.3">alerta LIMITS</text>
<rect x="1186.50" y="686.50" width="1093.00" height="321.60" fill="#181b1f" stroke="#26282d" stroke-width="1" rx="2.5"/>
<text x="1733.0" y="709.7" font-size="15.26" font-weight="bold" fill="#d8d9e1" text-anchor="middle" textLength="327.7" lengthAdjust="spacingAndGlyphs">Memory Usage / Requests &amp; Limits by container</text>
<rect x="1278.00" y="740.50" width="840.20" height="47.00" fill="#f2495c" fill-opacity="0.15"/>
<rect x="1278.00" y="787.50" width="840.20" height="22.80" fill="#fade2a" fill-opacity="0.15"/>
<rect x="1278.00" y="810.30" width="840.20" height="95.00" fill="#73bf69" fill-opacity="0.15"/>
<rect x="1278.00" y="905.30" width="840.20" height="24.10" fill="#fade2a" fill-opacity="0.15"/>
<rect x="1278.00" y="929.40" width="840.20" height="47.00" fill="#f2495c" fill-opacity="0.15"/>
<defs><linearGradient id="mg1186" gradientUnits="userSpaceOnUse" x1="0" y1="740.5" x2="0" y2="976.3"><stop offset="0" stop-color="#eab839" stop-opacity="0.43"/><stop offset="1" stop-color="#eab839" stop-opacity="0"/></linearGradient></defs>
<rect x="1278.00" y="789.00" width="840.20" height="187.30" fill="url(#mg1186)"/>
<path d="M1274.0 976.5 H2118.2 M1274.0 929.5 H2118.2 M1274.0 881.5 H2118.2 M1274.0 834.5 H2118.2 M1274.0 787.5 H2118.2 M1274.0 740.5 H2118.2 M1320.5 740.5 V980.3 M1390.5 740.5 V980.3 M1460.5 740.5 V980.3 M1530.5 740.5 V980.3 M1600.5 740.5 V980.3 M1670.5 740.5 V980.3 M1740.5 740.5 V980.3 M1810.5 740.5 V980.3 M1880.5 740.5 V980.3 M1950.5 740.5 V980.3 M2020.5 740.5 V980.3 M2090.5 740.5 V980.3" stroke="#ccccdc" stroke-opacity="0.12" stroke-width="1" fill="none"/>
<text x="1268.8" y="979.1" font-size="13.52" font-weight="normal" fill="#ccccdc" text-anchor="end" textLength="27.4" lengthAdjust="spacingAndGlyphs" stroke="#ccccdc" stroke-width="0.3">0.0%</text>
<text x="1268.8" y="931.9" font-size="13.52" font-weight="normal" fill="#ccccdc" text-anchor="end" textLength="34.3" lengthAdjust="spacingAndGlyphs" stroke="#ccccdc" stroke-width="0.3">20.0%</text>
<text x="1268.8" y="884.8" font-size="13.52" font-weight="normal" fill="#ccccdc" text-anchor="end" textLength="34.3" lengthAdjust="spacingAndGlyphs" stroke="#ccccdc" stroke-width="0.3">40.0%</text>
<text x="1268.8" y="837.6" font-size="13.52" font-weight="normal" fill="#ccccdc" text-anchor="end" textLength="34.3" lengthAdjust="spacingAndGlyphs" stroke="#ccccdc" stroke-width="0.3">60.0%</text>
<text x="1268.8" y="790.5" font-size="13.52" font-weight="normal" fill="#ccccdc" text-anchor="end" textLength="34.3" lengthAdjust="spacingAndGlyphs" stroke="#ccccdc" stroke-width="0.3">80.0%</text>
<text x="1268.8" y="743.3" font-size="13.52" font-weight="normal" fill="#ccccdc" text-anchor="end" textLength="41.4" lengthAdjust="spacingAndGlyphs" stroke="#ccccdc" stroke-width="0.3">100.0%</text>
<text x="1320.2" y="995.2" font-size="13.81" font-weight="normal" fill="#ccccdc" text-anchor="middle" textLength="31.0" lengthAdjust="spacingAndGlyphs" stroke="#ccccdc" stroke-width="0.3">12:45</text>
<text x="1390.2" y="995.2" font-size="13.81" font-weight="normal" fill="#ccccdc" text-anchor="middle" textLength="31.0" lengthAdjust="spacingAndGlyphs" stroke="#ccccdc" stroke-width="0.3">12:50</text>
<text x="1460.2" y="995.2" font-size="13.81" font-weight="normal" fill="#ccccdc" text-anchor="middle" textLength="31.0" lengthAdjust="spacingAndGlyphs" stroke="#ccccdc" stroke-width="0.3">12:55</text>
<text x="1530.2" y="995.2" font-size="13.81" font-weight="normal" fill="#ccccdc" text-anchor="middle" textLength="31.0" lengthAdjust="spacingAndGlyphs" stroke="#ccccdc" stroke-width="0.3">13:00</text>
<text x="1600.2" y="995.2" font-size="13.81" font-weight="normal" fill="#ccccdc" text-anchor="middle" textLength="31.0" lengthAdjust="spacingAndGlyphs" stroke="#ccccdc" stroke-width="0.3">13:05</text>
<text x="1670.2" y="995.2" font-size="13.81" font-weight="normal" fill="#ccccdc" text-anchor="middle" textLength="31.0" lengthAdjust="spacingAndGlyphs" stroke="#ccccdc" stroke-width="0.3">13:10</text>
<text x="1740.2" y="995.2" font-size="13.81" font-weight="normal" fill="#ccccdc" text-anchor="middle" textLength="31.0" lengthAdjust="spacingAndGlyphs" stroke="#ccccdc" stroke-width="0.3">13:15</text>
<text x="1810.2" y="995.2" font-size="13.81" font-weight="normal" fill="#ccccdc" text-anchor="middle" textLength="31.0" lengthAdjust="spacingAndGlyphs" stroke="#ccccdc" stroke-width="0.3">13:20</text>
<text x="1880.2" y="995.2" font-size="13.81" font-weight="normal" fill="#ccccdc" text-anchor="middle" textLength="31.0" lengthAdjust="spacingAndGlyphs" stroke="#ccccdc" stroke-width="0.3">13:25</text>
<text x="1950.2" y="995.2" font-size="13.81" font-weight="normal" fill="#ccccdc" text-anchor="middle" textLength="31.0" lengthAdjust="spacingAndGlyphs" stroke="#ccccdc" stroke-width="0.3">13:30</text>
<text x="2020.2" y="995.2" font-size="13.81" font-weight="normal" fill="#ccccdc" text-anchor="middle" textLength="31.0" lengthAdjust="spacingAndGlyphs" stroke="#ccccdc" stroke-width="0.3">13:35</text>
<text x="2090.2" y="995.2" font-size="13.81" font-weight="normal" fill="#ccccdc" text-anchor="middle" textLength="31.0" lengthAdjust="spacingAndGlyphs" stroke="#ccccdc" stroke-width="0.3">13:40</text>
<text transform="translate(1206.0 857.7) rotate(-90)" font-size="14" fill="#ccccdc" text-anchor="middle" textLength="45" lengthAdjust="spacingAndGlyphs">Percent</text>
<path d="M1278.0 789.0 H2118.2" stroke="#eab839" stroke-width="2" fill="none"/>
<rect x="2127.30" y="731.00" width="143.50" height="1.00" fill="#ccccdc" fill-opacity="0.07"/>
<rect x="2127.30" y="756.00" width="143.50" height="1.00" fill="#ccccdc" fill-opacity="0.07"/>
<rect x="2136.00" y="741.00" width="15.00" height="5.00" fill="#eab839" rx="1"/>
<rect x="2136.00" y="766.00" width="15.00" height="5.00" fill="#eab839" rx="1"/>
<text x="2160.1" y="748.2" font-size="14.10" font-weight="normal" fill="#ccccdc" text-anchor="start" textLength="101.8" lengthAdjust="spacingAndGlyphs" stroke="#ccccdc" stroke-width="0.3">alerta REQUESTS</text>
<text x="2160.1" y="773.2" font-size="14.10" font-weight="normal" fill="#ccccdc" text-anchor="start" textLength="79.0" lengthAdjust="spacingAndGlyphs" stroke="#ccccdc" stroke-width="0.3">alerta LIMITS</text>
</svg>
</body></html>
